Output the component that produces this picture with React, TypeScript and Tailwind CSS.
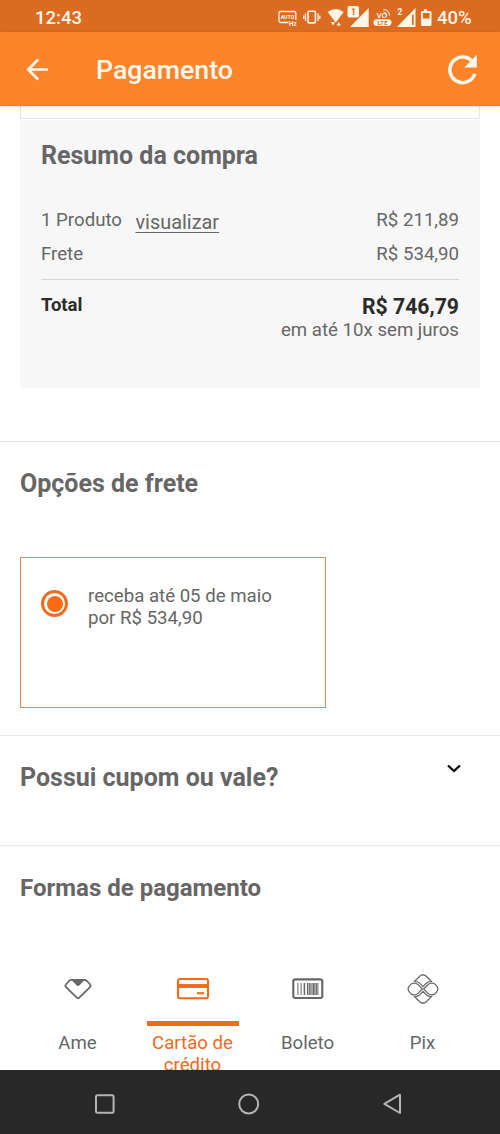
import type { ReactNode } from "react";

type PaymentMethod = {
  id: string;
  label: string;
  icon: ReactNode;
};

function StatusIcons() {
  return (
    <svg width="160" height="32" viewBox="276 0 160 32" fill="none" className="text-[#fff6ea]">
      <g stroke="currentColor" strokeWidth="1.3">
        <path d="M288.500 22.500h-8a1.500 1.500 0 0 1-1.500-1.500v-8a1.500 1.500 0 0 1 1.500-1.500h13.800a1.500 1.500 0 0 1 1.500 1.500v7" />
        <rect x="308" y="11.300" width="7.400" height="11.600" rx="1" strokeWidth="1.600" />
        <path d="M305.500 13.500v7.500M303.700 15.500v3.500M318 13.500v7.500M319.800 15.500v3.500" />
      </g>
      <g fill="currentColor" fontFamily="Roboto, sans-serif" fontWeight="700">
        <text x="280.700" y="19.300" fontSize="6" textLength="13.500" lengthAdjust="spacingAndGlyphs">AUTO</text>
        <text x="289" y="25.500" fontSize="6.300">Hz</text>
        <path d="M327.700 12q7.900-6 16 0l-8 10.500z" />
        <path d="M330.800 22h4.200l-2 3.500zM336.600 25.500h4.200l-2-3.500z" />
        <path d="M368.700 8v19H350z" />
        <rect x="347" y="5.500" width="12.500" height="12.500" rx="2.500" stroke="#db6b21" strokeWidth="1" />
        <text x="351" y="14.700" fontSize="8.500" fill="#db6b21">1</text>
        <text x="376.500" y="17.700" fontSize="8" fontWeight="500">VO</text>
        <rect x="373.500" y="19.200" width="18" height="6.800" rx="3.400" />
        <text x="377.500" y="24.900" fontSize="5.800" textLength="10" fill="#db6b21">LTE</text>
        <text x="397.500" y="14.500" fontSize="8.500">2</text>
        <path fillRule="evenodd" d="M415.500 8v19H397zM413.700 14l-1.700 1.500v9.500h1.700z" />
        <path fillRule="evenodd" d="M424 9.300h3v1.700h3q1.500 0 1.500 1.500v12q0 1.500-1.500 1.500h-7.500q-1.500 0-1.500-1.500v-12q0-1.500 1.500-1.500h1.500zM422.800 13v5.500h6.800v-5.500z" />
      </g>
      <path d="M383.500 9.500q5.500 0 6 6M383.500 11.800q3 .500 3.500 3.700" stroke="currentColor" strokeWidth="1" />
    </svg>
  );
}

function StatusBar() {
  return (
    <div className="flex h-8 items-center bg-[#db6b21] pl-[35px] text-[#fff6ea]">
      <span className="w-[241px] pt-[4px] text-[18.500px] font-medium leading-[22px]">12:43</span>
      <StatusIcons />
      <span className="pl-[1px] pt-[4px] text-[18.500px] font-medium leading-[22px]">40%</span>
    </div>
  );
}

function AppBar() {
  return (
    <header className="relative z-10 flex h-[74px] items-center border-b border-[#e8822f] bg-[#ff8329] pl-[26px] pr-[21px] text-[#fff8ee] shadow-[0_1px_3px_rgba(0,0,0,0.15)]">
      <svg width="24" height="24" viewBox="0 0 24 24" fill="none" stroke="currentColor" strokeWidth="2.700">
        <path d="M22 12.500H3M12.200 2.500l-10 10 10 10" />
      </svg>
      <h1 className="flex-1 pl-[46px] pt-[3px] text-[26.700px] font-medium leading-8">Pagamento</h1>
      <svg width="32" height="32" viewBox="447 53 32 32" fill="none">
        <path d="M474.800 73.800a12.800 12.800 0 1 1-2.600-12.500" stroke="currentColor" strokeWidth="3.500" />
        <path d="M476.800 54.800v12.700h-12.700z" fill="currentColor" />
      </svg>
    </header>
  );
}

function OrderSummary() {
  return (
    <section className="mx-5 mt-[1px] h-[268px] bg-[#f7f7f7] px-[21px] pt-5">
      <h2 className="text-[25px] font-bold leading-8">Resumo da compra</h2>
      <div className="mt-[37px] flex h-[34px] justify-between">
        <div className="flex">
          <span>1 Produto</span>
          <a className="ml-[13.500px] pt-[3px] text-[19.900px] underline decoration-1 underline-offset-[3px]">visualizar</a>
        </div>
        <span>R$ 211,89</span>
      </div>
      <div className="flex h-[37px] justify-between border-b border-[#d3d3d3]">
        <span>Frete</span>
        <span>R$ 534,90</span>
      </div>
      <div className="flex justify-between pt-[14px]">
        <span className="text-[18.500px] font-bold text-[#2b2b2b]">Total</span>
        <div className="flex flex-col items-end">
          <strong className="text-[21.200px] font-bold leading-[25px] text-[#2b2b2b]">R$ 746,79</strong>
          <span>em até 10x sem juros</span>
        </div>
      </div>
    </section>
  );
}

function ShippingOptions() {
  return (
    <section className="mt-[53px] h-[294px] border-t border-[#e4e4e4] px-5 pt-[26px]">
      <h2 className="text-[25px] font-bold leading-8">Opções de frete</h2>
      <label className="mt-[57px] flex h-[151px] w-[306px] border border-[#dd8a4e] pl-5 pt-[27px]">
        <span className="mt-[5px] flex size-[27px] items-center justify-center rounded-full border-3 border-[#ef6c20]">
          <span className="size-[16px] rounded-full bg-[#ff6a13]" />
        </span>
        <span className="pl-5">
          receba até 05 de maio
          <br />
          por R$ 534,90
        </span>
      </label>
    </section>
  );
}

function AmeIcon() {
  return (
    <svg width="32" height="32" viewBox="61.500 973 32 32" fill="none" stroke="#666" strokeWidth="1.700" strokeLinejoin="round">
      <path d="M71 979.800h13q1.200 0 2 .8l3.300 3.400q1.600 1.700 0 3.300l-10.600 10.400q-1.200 1.200-2.400 0l-10.600-10.400q-1.600-1.600 0-3.300l3.300-3.400q.8-.8 2-.8z" />
      <path d="M71 980h13l-5 5.200q-1.500 1.400-3 0z" fill="#666" stroke="none" />
    </svg>
  );
}

function CardIcon() {
  return (
    <svg width="34" height="32" viewBox="176 973 34 32" fill="none" stroke="#f26a1b" strokeWidth="2.100">
      <rect x="178" y="979" width="30" height="19.300" rx="2" />
      <path d="M178 986h30" strokeWidth="3.900" />
      <path d="M197 993.200h7" />
    </svg>
  );
}

function BarcodeIcon() {
  return (
    <svg width="32" height="32" viewBox="291.600 973 32 32" fill="none" stroke="#666">
      <rect x="292.900" y="979.400" width="29" height="18.600" rx="2" strokeWidth="2.100" />
      <path d="M297.500 983v12M300.700 983v12M311.500 983v12M317.500 983v12" strokeWidth="1" />
      <path d="M304 983v12M307.300 983v12M309.500 983v12M315.800 983v12" strokeWidth="1.500" />
      <path d="M313.300 983v12" strokeWidth="2" />
    </svg>
  );
}

function PixIcon() {
  return (
    <svg width="32" height="32" viewBox="-17 -17 34 34" fill="none" stroke="#666" strokeWidth="1.300">
      <path d="M-8.800-8.200l5.300-5.300q3.500-3.300 7 0l5.300 5.300c-2.800.2-4.300 1-5.600 2.300l-3.200 3.300-3.200-3.300c-1.300-1.300-2.800-2.100-5.600-2.300z" />
      <path d="M-8.800 8.200l5.300 5.300q3.500 3.300 7 0l5.300-5.300c-2.800-.2-4.300-1-5.600-2.300l-3.200-3.300-3.200 3.300c-1.300 1.300-2.800 2.100-5.600 2.300z" />
      <path d="M-.700 0l-4.600-4.600q-1.700-1.700-4.200-1.700t-3.700 1.700l-1 1.100q-3.300 3.500 0 7l1 1.100q1.200 1.700 3.700 1.700t4.200-1.700z" />
      <path d="M.700 0l4.600-4.600q1.700-1.700 4.200-1.700t3.700 1.700l1 1.100q3.300 3.500 0 7l-1 1.100q-1.200 1.700-3.700 1.700t-4.200-1.700z" />
    </svg>
  );
}

const methods: PaymentMethod[] = [
  { id: "ame", label: "Ame", icon: <AmeIcon /> },
  { id: "card", label: "Cartão de crédito", icon: <CardIcon /> },
  { id: "boleto", label: "Boleto", icon: <BarcodeIcon /> },
  { id: "pix", label: "Pix", icon: <PixIcon /> },
];

function PaymentMethods({ selected }: { selected: string }) {
  return (
    <section className="border-t border-[#e8e8e8] px-5 pt-[26px]">
      <h2 className="text-[24px] font-bold leading-8">Formas de pagamento</h2>
      <div className="mt-[69px] grid grid-cols-4">
        {methods.map((method) => {
          const active = method.id === selected;
          return (
            <button key={method.id} className={`flex flex-col items-center ${active ? "text-[#f26a1b]" : ""}`}>
              <span className="flex h-8 items-center">{method.icon}</span>
              <span className={`mt-[16px] h-[5px] w-[92px] ${active ? "bg-[#f26a1b]" : ""}`} />
              <span className="mt-[6px] w-[96px]">{method.label}</span>
            </button>
          );
        })}
      </div>
    </section>
  );
}

function SystemNav() {
  return (
    <nav className="flex h-16 shrink-0 items-center bg-[#282828] pl-[94px] pt-[3px]">
      <svg width="310" height="24" viewBox="94 1092 310 24" fill="none" stroke="#b4b4b4" strokeWidth="2" strokeLinejoin="round">
        <rect x="96" y="1095.200" width="17.600" height="17.600" rx="1.500" />
        <circle cx="248.700" cy="1104" r="9.500" />
        <path d="M400 1094.700v18.300l-15.700-9.100z" />
      </svg>
    </nav>
  );
}

export default function App() {
  return (
    <div className="flex h-[1134px] w-[500px] flex-col overflow-hidden bg-white font-['Roboto',sans-serif] text-[18.650px] leading-[22px] text-[#666]">
      <StatusBar />
      <AppBar />
      <main className="min-h-0 flex-1 overflow-hidden">
        <div className="mx-5 h-[13px] border border-t-0 border-[#e4e4e4]" />
        <OrderSummary />
        <ShippingOptions />
        <section className="flex h-[110px] justify-between border-t border-[#e8e8e8] pl-5 pr-[39px] pt-[25px]">
          <h2 className="pt-[1px] text-[25px] font-bold leading-8">Possui cupom ou vale?</h2>
          <svg width="14" height="14" viewBox="0 0 14 14" fill="none" stroke="#000" strokeWidth="2.300">
            <path d="M1 4.500l6 5.500 6-5.500" />
          </svg>
        </section>
        <PaymentMethods selected="card" />
      </main>
      <SystemNav />
    </div>
  );
}
